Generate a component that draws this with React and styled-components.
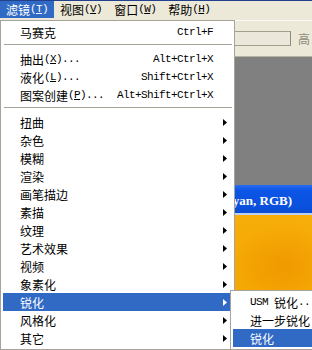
import React from "react";
import styled, { createGlobalStyle } from "styled-components";

const Global = createGlobalStyle`
  html, body { margin: 0; padding: 0; }
  body {
    width: 312px; height: 350px; overflow: hidden;
    font-family: "Noto Sans CJK SC", "Liberation Sans", sans-serif;
    font-size: 12px; color: #000;
  }
`;

const CJK = `"Noto Sans CJK SC", "Liberation Sans", sans-serif`;
const MONO = `"Liberation Mono", "Noto Sans CJK SC", monospace`;

const Window = styled.div`
  position: relative;
  width: 312px;
  height: 350px;
  overflow: hidden;
  display: flex;
  flex-direction: column;
  background: #808080;
`;

const MenuBar = styled.div`
  display: flex;
  height: 20px;
  box-sizing: border-box;
  border-top: 1px solid #23408e;
  background: #ece9d8;
  align-items: flex-start;
`;

const MenuBarItem = styled.div`
  height: 17px;
  padding: 0 6px;
  display: flex;
  align-items: center;
  font-family: ${CJK};
  font-size: 12px;
  line-height: 17px;
  white-space: nowrap;
  background: ${(p) => (p.$active ? "#316ac5" : "transparent")};
  color: ${(p) => (p.$active ? "#fff" : "#000")};
`;

const Mono = styled.span`
  font-family: ${MONO};
  font-size: 11px;
  letter-spacing: -0.6px;
  white-space: pre;
`;

const OptionBar = styled.div`
  height: 37px;
  box-sizing: border-box;
  border-top: 1px solid #fbfaf5;
  border-bottom: 1px solid #b8b4a4;
  background: #ece9d8;
  display: flex;
  align-items: center;
  gap: 7px;
  padding-left: 211px;
`;

const Field = styled.div`
  flex: 0 0 auto;
  width: 80px;
  height: 15px;
  box-sizing: border-box;
  border: 1px solid #a39f90;
  border-right-color: #8e8a7c;
  background: #ebe7db;
`;

const FieldLabel = styled.span`
  flex: 0 0 auto;
  font-family: ${CJK};
  font-size: 12px;
  color: #8c8a80;
  white-space: nowrap;
`;

const Workspace = styled.div`
  flex: 1;
  display: flex;
  flex-direction: column;
  padding: 128px 0 0 120px;
  background: #808080;
`;

const DocWindow = styled.div`
  flex: 1;
  display: flex;
  flex-direction: column;
`;

const DocTitle = styled.div`
  height: 30px;
  box-sizing: border-box;
  display: flex;
  align-items: center;
  justify-content: flex-end;
  padding: 3px 20px 0 0;
  background: linear-gradient(#2a6cf0 0%, #0c55e6 20%, #0a50dc 80%, #0b4cd2 100%);
  border-bottom: 2px solid #bcd0f4;
  color: #fff;
  font-family: "Liberation Serif", serif;
  font-weight: bold;
  font-size: 13px;
  white-space: nowrap;
`;

const Canvas = styled.div`
  flex: 1;
  background:
    radial-gradient(ellipse 50px 40px at 165px 50px, rgba(236, 140, 0, 0.5), rgba(236, 140, 0, 0) 100%),
    radial-gradient(ellipse 120px 90px at 150px 60px, #f4a500, #f8b20e 100%);
`;

const Panel = styled.div`
  position: absolute;
  left: ${(p) => p.$left}px;
  top: ${(p) => p.$top}px;
  width: ${(p) => p.$width}px;
  box-sizing: border-box;
  border: 1px solid #a6a39a;
  padding: 2px;
  background: #fff;
  display: flex;
  flex-direction: column;
`;

const Row = styled.div`
  height: 18px;
  display: flex;
  align-items: center;
  padding-left: 17px;
  background: ${(p) => (p.$active ? "#316ac5" : "transparent")};
  color: ${(p) => (p.$active ? "#fff" : "#000")};
  font-family: ${CJK};
  font-size: 12px;
  white-space: nowrap;
`;

const Label = styled.span`
  flex: 1;
  display: flex;
  align-items: center;
`;

const Shortcut = styled.span`
  font-family: ${MONO};
  font-size: 11px;
  letter-spacing: -0.6px;
  white-space: pre;
`;

const ArrowCol = styled.span`
  width: 19px;
  box-sizing: border-box;
  padding-left: 10px;
  display: flex;
  align-items: center;
`;

const Separator = styled.div`
  height: 1px;
  margin: 3px 0 5px 1px;
  background: #a6a39a;
`;

const Arrow = () => (
  <svg width="4" height="7" viewBox="0 0 4 7">
    <polygon points="0,0 4,3.5 0,7" fill="currentColor" />
  </svg>
);

const mainItems = [
  { label: "马赛克", shortcut: "Ctrl+F" },
  { sep: true },
  { label: "抽出", key: "X", dots: true, shortcut: "Alt+Ctrl+X" },
  { label: "液化", key: "L", dots: true, shortcut: "Shift+Ctrl+X" },
  { label: "图案创建", key: "P", dots: true, shortcut: "Alt+Shift+Ctrl+X" },
  { sep: true },
  { label: "扭曲", sub: true },
  { label: "杂色", sub: true },
  { label: "模糊", sub: true },
  { label: "渲染", sub: true },
  { label: "画笔描边", sub: true },
  { label: "素描", sub: true },
  { label: "纹理", sub: true },
  { label: "艺术效果", sub: true },
  { label: "视频", sub: true },
  { label: "象素化", sub: true },
  { label: "锐化", sub: true, active: true },
  { label: "风格化", sub: true },
  { label: "其它", sub: true },
];

const subItems = [
  { pre: "USM ", label: "锐化", post: "..." },
  { label: "进一步锐化" },
  { label: "锐化", active: true },
];

const MenuTitle = ({ text, k, active }) => (
  <MenuBarItem $active={active}>
    {text}
    <Mono>
      (<u>{k}</u>)
    </Mono>
  </MenuBarItem>
);

export default function App() {
  return (
    <>
      <Global />
      <Window>
        <MenuBar>
          <MenuTitle text="滤镜" k="T" active />
          <MenuTitle text="视图" k="V" />
          <MenuTitle text="窗口" k="W" />
          <MenuTitle text="帮助" k="H" />
        </MenuBar>
        <OptionBar>
          <Field />
          <FieldLabel>高</FieldLabel>
        </OptionBar>
        <Workspace>
          <DocWindow>
            <DocTitle>未标题-1 @ 100% (Cyan, RGB)</DocTitle>
            <Canvas />
          </DocWindow>
        </Workspace>

        <Panel $left={0} $top={20} $width={235}>
          {mainItems.map((it, i) =>
            it.sep ? (
              <Separator key={i} />
            ) : (
              <Row key={i} $active={it.active}>
                <Label>
                  {it.label}
                  {it.key && (
                    <Mono>
                      (<u>{it.key}</u>){it.dots ? "..." : ""}
                    </Mono>
                  )}
                </Label>
                {it.shortcut && <Shortcut>{it.shortcut}</Shortcut>}
                <ArrowCol>{it.sub && <Arrow />}</ArrowCol>
              </Row>
            )
          )}
        </Panel>

        <Panel $left={230} $top={290} $width={130}>
          {subItems.map((it, i) => (
            <Row key={i} $active={it.active}>
              <Label>
                {it.pre && <Mono>{it.pre}</Mono>}
                {it.label}
                {it.post && <Mono>{it.post}</Mono>}
              </Label>
            </Row>
          ))}
        </Panel>
      </Window>
    </>
  );
}
